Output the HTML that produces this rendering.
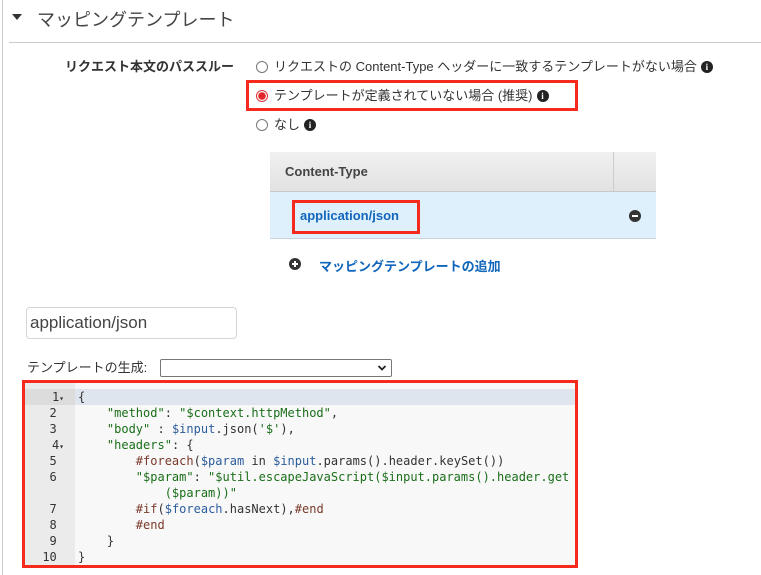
<!DOCTYPE html>
<html><head><meta charset="utf-8"><style>
*{margin:0;padding:0;box-sizing:border-box}
body{width:761px;height:575px;background:#fff;font-family:"Liberation Sans","Noto Sans CJK JP",sans-serif;color:#333;position:relative;overflow:hidden}
.abs{position:absolute}
.row{display:flex;align-items:center;height:16px;line-height:16px;white-space:nowrap}
.info{display:inline-block;width:12px;height:12px;border-radius:50%;background:#222;color:#fff;font:bold 9px/12px "Liberation Serif",serif;text-align:center;margin-left:4px;flex:none}
.radio{display:inline-block;width:12px;height:12px;border-radius:50%;border:1px solid #777;background:#fff;margin-right:6px;flex:none}
.code{font-family:"DejaVu Sans Mono","Liberation Mono",monospace;font-size:12px}
.cl{position:absolute;left:78px;height:16px;line-height:16px;white-space:pre}
.ln{position:absolute;left:24px;width:40px;text-align:right;height:16px;line-height:16px;color:#333}
.s{color:#1a6e1a}.v{color:#2c5d9b}.k{color:#7a3a2a}
</style></head><body>
<div class="abs" style="left:2px;top:0;width:1px;height:575px;background:#ccc"></div>
<div class="abs" style="left:12px;top:14px;width:0;height:0;border-left:5px solid transparent;border-right:5px solid transparent;border-top:6px solid #333"></div>
<div class="abs" style="left:37px;top:6px;font-size:18px;color:#444">マッピングテンプレート</div>
<div class="abs" style="left:9px;top:42px;width:752px;height:1px;background:#ccc"></div>

<div class="abs row" style="left:65px;top:59px;font-size:13px;font-weight:bold;color:#333">リクエスト本文のパススルー</div>
<div class="abs row" style="left:256px;top:59px;font-size:13px"><span class="radio"></span>リクエストの Content-Type ヘッダーに一致するテンプレートがない場合<span class="info">i</span></div>
<div class="abs" style="left:246px;top:80px;width:332px;height:31px;border:3px solid #f52a1c"></div>
<div class="abs row" style="left:256px;top:88px;font-size:13px"><span class="radio" style="border-color:#d33;background:radial-gradient(circle,#e0262b 3.5px,#fff 4px)"></span>テンプレートが定義されていない場合 (推奨)<span class="info">i</span></div>
<div class="abs row" style="left:256px;top:117px;font-size:13px"><span class="radio"></span>なし<span class="info">i</span></div>

<div class="abs" style="left:270px;top:152px;width:386px;height:40px;background:linear-gradient(#f0f0f0,#e2e2e2);border-bottom:1px solid #c8c8c8"></div>
<div class="abs" style="left:613px;top:152px;width:1px;height:40px;background:#ccc"></div>
<div class="abs" style="left:285px;top:164px;font-size:13px;font-weight:bold;color:#444">Content-Type</div>
<div class="abs" style="left:270px;top:192px;width:386px;height:47px;background:#def0fc;border-bottom:1px solid #c8d4dc"></div>
<div class="abs" style="left:292px;top:200px;width:128px;height:34px;border:3px solid #f52a1c"></div>
<div class="abs" style="left:300px;top:208px;font-size:13px;font-weight:bold;color:#1166bb">application/json</div>
<div class="abs" style="left:629px;top:210px;width:12px;height:12px;border-radius:50%;background:#333"><div style="position:absolute;left:3px;top:5px;width:6px;height:2px;background:#fff"></div></div>
<div class="abs" style="left:289px;top:258px;width:12px;height:12px;border-radius:50%;background:#333"><div style="position:absolute;left:3px;top:5px;width:6px;height:2px;background:#fff"></div><div style="position:absolute;left:5px;top:3px;width:2px;height:6px;background:#fff"></div></div>
<div class="abs" style="left:319px;top:256px;font-size:13px;font-weight:bold;color:#1166bb">マッピングテンプレートの追加</div>

<div class="abs" style="left:26px;top:307px;width:211px;height:32px;border:1px solid #d5d5d5;border-radius:4px"></div>
<div class="abs" style="left:30px;top:313px;font-size:17px;color:#444">application/json</div>
<div class="abs row" style="left:27px;top:360px;font-size:13px;color:#333">テンプレートの生成:</div>
<div class="abs" style="left:160px;top:359px;width:232px;height:18px;border:1px solid #777;border-radius:2px;background:#fff"></div>
<svg class="abs" style="left:377px;top:364px" width="10" height="8" viewBox="0 0 10 8"><path d="M1.5 2 L5 5.5 L8.5 2" stroke="#222" stroke-width="1.8" fill="none"/></svg>

<div class="abs" style="left:22px;top:380px;width:556px;height:188px;border:3px solid #f52a1c;background:#f8f8f8"></div>
<div class="abs" style="left:25px;top:383px;width:50px;height:182px;background:#ebebeb"></div>
<div class="abs" style="left:25px;top:389px;width:50px;height:16px;background:#dcdcdc"></div>
<div class="abs" style="left:75px;top:389px;width:500px;height:16px;background:#dfe5ee"></div>
<div class="code">
<div class="ln" style="top:389px">1<span style="font-size:8px">▾</span></div>
<div class="ln" style="top:405px">2&nbsp;</div>
<div class="ln" style="top:421px">3&nbsp;</div>
<div class="ln" style="top:437px">4<span style="font-size:8px">▾</span></div>
<div class="ln" style="top:453px">5&nbsp;</div>
<div class="ln" style="top:469px">6&nbsp;</div>
<div class="ln" style="top:501px">7&nbsp;</div>
<div class="ln" style="top:517px">8&nbsp;</div>
<div class="ln" style="top:533px">9&nbsp;</div>
<div class="ln" style="top:549px">10&nbsp;</div>
<div class="cl" style="top:389px">{</div>
<div class="cl" style="top:405px">    <span class="s">"method"</span>: <span class="s">"$context.httpMethod"</span>,</div>
<div class="cl" style="top:421px">    <span class="s">"body"</span> : <span class="v">$input</span>.json(<span class="s">'$'</span>),</div>
<div class="cl" style="top:437px">    <span class="s">"headers"</span>: {</div>
<div class="cl" style="top:453px">        <span class="k">#foreach</span>(<span class="v">$param</span> in <span class="v">$input</span>.params().header.keySet())</div>
<div class="cl" style="top:469px">        <span class="s">"$param"</span>: <span class="s">"$util.escapeJavaScript($input.params().header.get</span></div>
<div class="cl" style="top:485px">            <span class="s">($param))"</span></div>
<div class="cl" style="top:501px">        <span class="k">#if</span>(<span class="v">$foreach</span>.hasNext),<span class="k">#end</span></div>
<div class="cl" style="top:517px">        <span class="k">#end</span></div>
<div class="cl" style="top:533px">    }</div>
<div class="cl" style="top:549px">}</div>
</div>
</body></html>
